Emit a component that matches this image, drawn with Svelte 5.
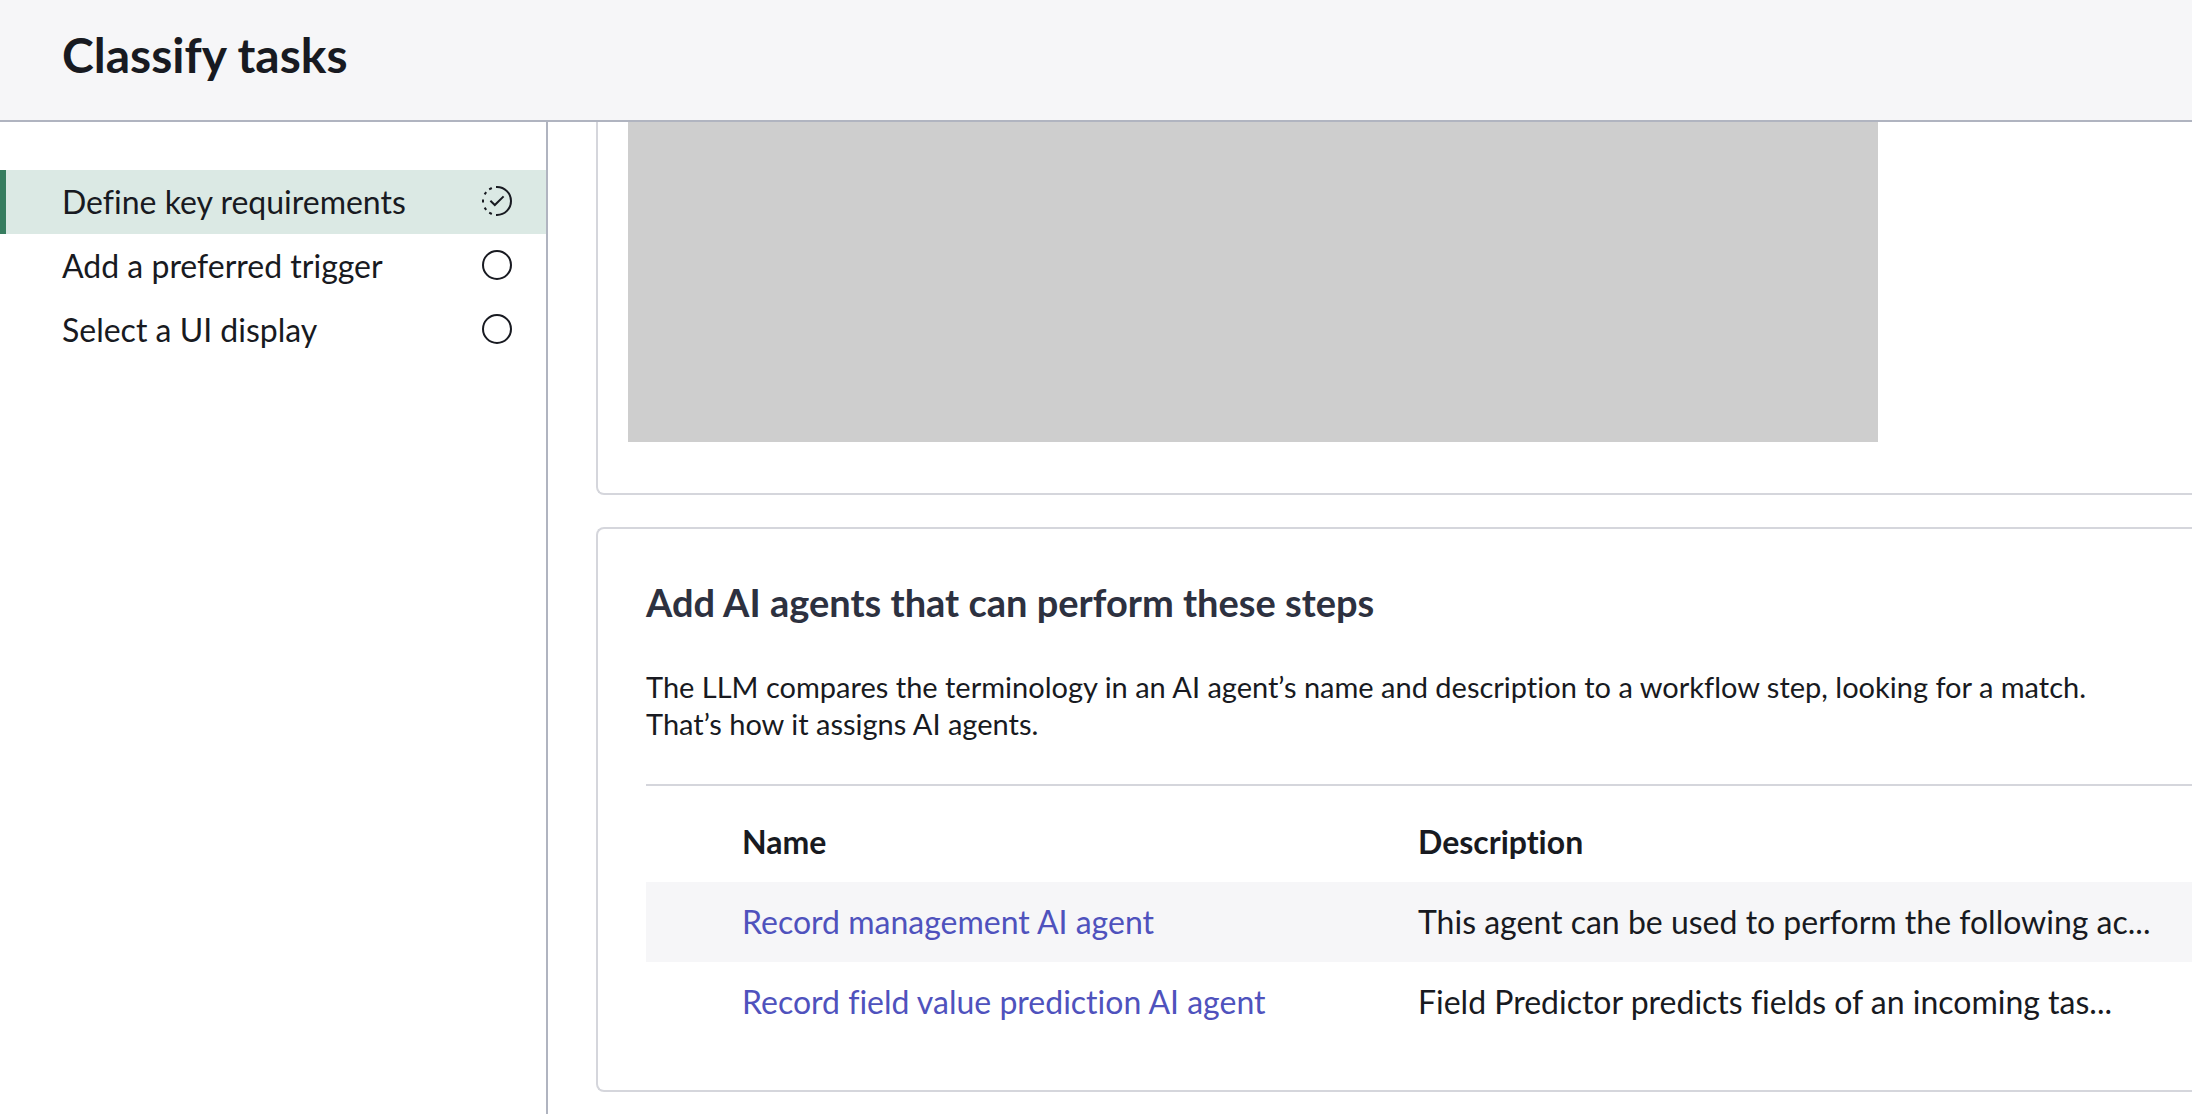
<script>
	let steps = [
		{ label: 'Define key requirements', status: 'partial' },
		{ label: 'Add a preferred trigger', status: 'empty' },
		{ label: 'Select a UI display', status: 'empty' }
	];

	let agents = [
		{
			name: 'Record management AI agent',
			description: 'This agent can be used to perform the following ac...'
		},
		{
			name: 'Record field value prediction AI agent',
			description: 'Field Predictor predicts fields of an incoming tas...'
		}
	];

	let current = 0;
</script>

<div class="page">
	<header>
		<h1>Classify tasks</h1>
	</header>

	<div class="body">
		<nav aria-label="Setup steps">
			{#each steps as step, i}
				<button
					class="step"
					class:active={i === current}
					aria-current={i === current ? 'step' : undefined}
					on:click={() => (current = i)}
				>
					<span>{step.label}</span>
					<svg viewBox="0 0 32 32" aria-hidden="true">
						{#if step.status === 'partial'}
							<path d="M15 2h1a14 14 0 0 1 0 28h-1" />
							<!-- dashed left half -->
							<path
								class="dashes"
								d="M10.8 3L8.2 4.4M5.2 7.2L3.6 9.4M2 14.5v3M3.6 22.6l1.6 2.2M8.2 27.6l2.6 1.4"
							/>
							<path d="M9.4 15.8l4.4 4.2 8.8-8.6" />
						{:else}
							<circle cx="16" cy="16" r="14" />
						{/if}
					</svg>
				</button>
			{/each}
		</nav>

		<main>
			<section class="card">
				<div class="placeholder"></div>
			</section>

			<section class="card agents">
				<h2>Add AI agents that can perform these steps</h2>
				<p>
					The LLM compares the terminology in an AI agent’s name and description to a workflow
					step, looking for a match.<br />That’s how it assigns AI agents.
				</p>
				<div class="list">
					<table>
						<thead>
							<tr>
								<th scope="col">Name</th>
								<th scope="col">Description</th>
							</tr>
						</thead>
						<tbody>
							{#each agents as agent}
								<tr>
									<td><a href="#agent">{agent.name}</a></td>
									<td>{agent.description}</td>
								</tr>
							{/each}
						</tbody>
					</table>
				</div>
			</section>
		</main>
	</div>
</div>

<style>
	:global(body) {
		margin: 0;
		background: #fff;
	}

	.page {
		display: flex;
		flex-direction: column;
		min-height: 100vh;
		overflow: hidden;
		font-family: Lato, 'Noto Sans', sans-serif;
		font-size: 32px;
		font-variant-ligatures: none;
		color: #181a21;
	}

	header {
		padding: 27px 62px 37px;
		background: #f6f6f8;
		border-bottom: 2px solid #b0b4c0;
	}

	h1 {
		margin: 0;
		font-size: 48px;
		line-height: 56px;
		font-weight: 700;
	}

	.body {
		display: flex;
		flex: 1;
	}

	nav {
		flex: 0 0 546px;
		padding-top: 48px;
		border-right: 2px solid #b0b4c0;
	}

	.step {
		display: flex;
		align-items: center;
		justify-content: space-between;
		box-sizing: border-box;
		width: 100%;
		height: 64px;
		padding: 0 33px 2px 56px;
		border: 0;
		border-left: 6px solid transparent;
		background: none;
		font: inherit;
		font-variant-ligatures: inherit;
		color: inherit;
		text-align: left;
		cursor: pointer;
	}

	.step.active {
		background: #dbe9e4;
		border-left-color: #377d5f;
	}

	svg {
		width: 32px;
		height: 32px;
		fill: none;
		stroke: #181a21;
		stroke-width: 2;
	}

	main {
		flex: 1;
		min-width: 0;
		padding-left: 48px;
	}

	/* cards run off the right edge of the window */
	.card {
		border: 2px solid #d5d6dc;
		border-right: 0;
		border-radius: 8px 0 0 8px;
	}

	.card:first-child {
		border-top: 0;
		border-top-left-radius: 0;
		padding: 0 30px 51px;
		margin-bottom: 32px;
	}

	.placeholder {
		max-width: 1250px;
		height: 320px;
		background: #cecece;
	}

	.agents {
		padding: 48px 0 48px 48px;
	}

	h2 {
		margin: 0;
		font-size: 38px;
		line-height: 50px;
		font-weight: 700;
		color: #2d3140;
	}

	p {
		margin: 41px 0 42px;
		font-size: 29px;
		line-height: 37px;
	}

	.list {
		padding-top: 16px;
		border-top: 2px solid #d5d6dc;
	}

	table {
		width: 100%;
		border-collapse: collapse;
		table-layout: fixed;
	}

	th,
	td {
		height: 78px;
		padding: 0 0 2px;
		text-align: left;
		white-space: nowrap;
	}

	th:first-child,
	td:first-child {
		width: 676px;
		padding-left: 96px;
	}

	tbody tr:nth-child(odd) {
		background: #f6f6f8;
	}

	a {
		color: #4f52bd;
		text-decoration: none;
	}
</style>
